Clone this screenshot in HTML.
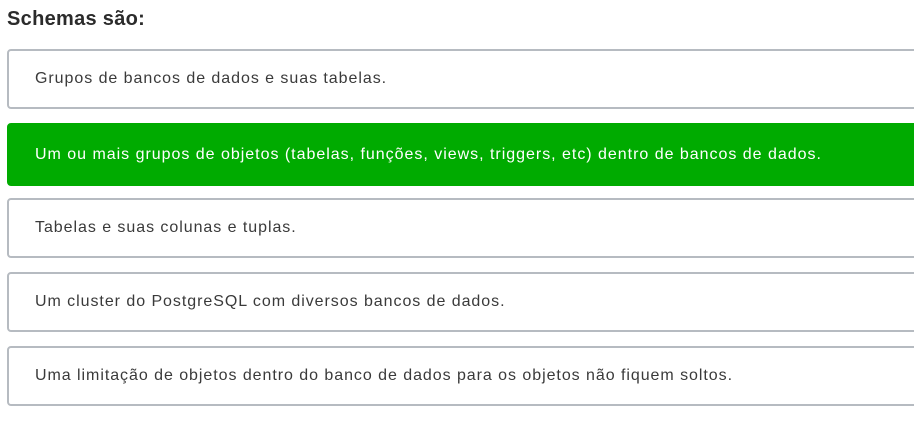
<!DOCTYPE html>
<html><head><meta charset="utf-8"><style>
body{margin:0;width:914px;height:426px;background:#fff;overflow:hidden;font-family:"Liberation Sans",sans-serif;color:#333}
h1{position:absolute;left:7px;top:8px;margin:0;font-size:20px;font-weight:bold;color:#2b2b2b;letter-spacing:0.3px}
.b{position:absolute;left:7px;width:940px;height:56px;border:2px solid #b6bbc1;border-radius:4px;box-sizing:content-box;line-height:56px;padding-left:26px;font-size:16px;color:#3a3a3a;letter-spacing:0.95px}
.g{background:#00ab00;border-color:#00ab00;color:#fff;letter-spacing:0.98px;height:59px;line-height:59px}
</style></head><body>
<h1>Schemas são:</h1>
<div class="b" style="top:49px">Grupos de bancos de dados e suas tabelas.</div>
<div class="b g" style="top:123px;height:61px;line-height:61px;border-width:1px;width:941px;padding-left:27px">Um ou mais grupos de objetos (tabelas, funções, views, triggers, etc) dentro de bancos de dados.</div>
<div class="b" style="top:198px">Tabelas e suas colunas e tuplas.</div>
<div class="b" style="top:272px">Um cluster do PostgreSQL com diversos bancos de dados.</div>
<div class="b" style="top:346px">Uma limitação de objetos dentro do banco de dados para os objetos não fiquem soltos.</div>
</body></html>
